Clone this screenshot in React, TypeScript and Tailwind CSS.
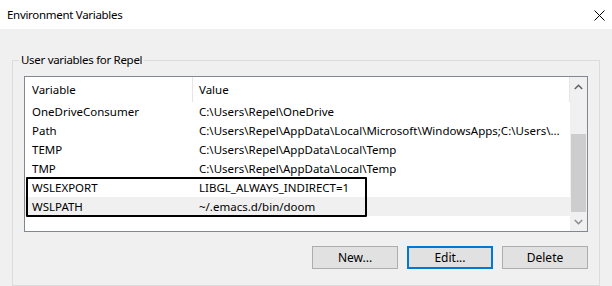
import React from 'react';

const rows = [
    { name: 'OneDriveConsumer', value: 'C:\\Users\\Repel\\OneDrive' },
    { name: 'Path', value: 'C:\\Users\\Repel\\AppData\\Local\\Microsoft\\WindowsApps;C:\\Users\\...' },
    { name: 'TEMP', value: 'C:\\Users\\Repel\\AppData\\Local\\Temp' },
    { name: 'TMP', value: 'C:\\Users\\Repel\\AppData\\Local\\Temp' },
];

const marked = [
    { name: 'WSLEXPORT', value: 'LIBGL_ALWAYS_INDIRECT=1' },
    { name: 'WSLPATH', value: '~/.emacs.d/bin/doom', selected: true },
];

function Row({ name, value, selected }: { name: string; value: string; selected?: boolean }) {
    return (
        <div className={`flex h-[19px] items-center ${selected ? 'bg-[#f0f0f0]' : ''}`}>
            <div className="w-[168px] pl-[7px] whitespace-nowrap overflow-hidden">{name}</div>
            <div className="flex-1 pl-[6px] whitespace-nowrap overflow-hidden">{value}</div>
        </div>
    );
}

export default function App() {
    return (
        <div className="w-[612px] h-[286px] bg-[#f0f0f0] text-[11.5px] leading-[16px] text-black font-['Noto_Sans',sans-serif] overflow-hidden">
            {/* title bar */}
            <div className="h-[29px] bg-white flex items-center justify-between pl-[7px] pr-[7px]">
                <span className="tracking-[-0.3px]">Environment Variables</span>
                <svg width="11" height="11" viewBox="0 0 11 11" className="mt-[1px]">
                    <path d="M0.5 0.5 L10.5 10.5 M10.5 0.5 L0.5 10.5" stroke="#000" strokeWidth="1" />
                </svg>
            </div>

            {/* group box */}
            <div className="relative mt-[31px] mx-[12px] h-[226px] border border-[#dcdcdc] px-[11px] pt-[15px]">
                <span className="absolute left-[6px] -top-[9px] px-[2px] bg-[#f0f0f0] tracking-[-0.3px] leading-[16px]">User variables for Repel</span>

                {/* list view */}
                <div className="flex h-[156px] border border-[#828790] bg-white">
                    <div className="flex-1 flex flex-col">
                        <div className="flex h-[25px] items-center">
                            <div className="w-[168px] h-full pl-[7px] flex items-center border-r border-[#e5e5e5]">Variable</div>
                            <div className="flex-1 h-full pl-[6px] flex items-center border-r border-[#e5e5e5]">Value</div>
                        </div>
                        {rows.map((r) => (
                            <Row key={r.name} {...r} />
                        ))}
                        <div className="relative">
                            {marked.map((r) => (
                                <Row key={r.name} {...r} />
                            ))}
                            <div className="absolute left-[1px] -top-[1px] w-[341px] h-[40px] border-[2.5px] border-black rounded-[1px]" />
                        </div>
                    </div>

                    {/* scrollbar */}
                    <div className="w-[17px] bg-[#f0f0f0] flex flex-col">
                        <div className="h-[20px] flex items-center justify-center">
                            <svg width="9" height="6" viewBox="0 0 9 6">
                                <path d="M0.8 5 L4.5 1.3 L8.2 5" fill="none" stroke="#606060" strokeWidth="1.5" />
                            </svg>
                        </div>
                        <div className="h-[37px]" />
                        <div className="h-[78px] mx-[1px] bg-[#cdcdcd]" />
                        <div className="flex-1 flex items-center justify-center">
                            <svg width="9" height="6" viewBox="0 0 9 6">
                                <path d="M0.8 1 L4.5 4.7 L8.2 1" fill="none" stroke="#8a8a8a" strokeWidth="1.5" />
                            </svg>
                        </div>
                    </div>
                </div>

                {/* buttons */}
                <div className="flex justify-end gap-[9px] mt-[14px] text-[12px]">
                    <button className="w-[86px] h-[23px] bg-[#e1e1e1] border border-[#adadad]">New...</button>
                    <button className="w-[86px] h-[23px] bg-[#e1e1e1] border-2 border-[#0078d7]">Edit...</button>
                    <button className="w-[86px] h-[23px] bg-[#e1e1e1] border border-[#adadad]">Delete</button>
                </div>
            </div>
        </div>
    );
}
